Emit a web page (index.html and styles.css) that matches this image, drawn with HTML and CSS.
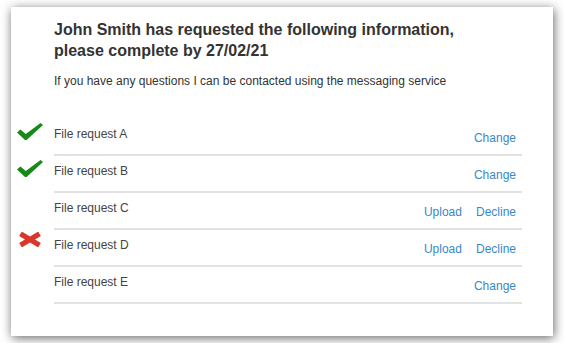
FILE: index.html
```html
<!DOCTYPE html>
<html lang="en">

<head>
  <meta charset="UTF-8">
  <meta name="viewport" content="width=device-width, initial-scale=1.0">
  <title>File requests</title>
  <link rel="stylesheet" href="styles.css">
</head>

<body>
  <div class="card">
    <h1 class="title">John Smith has requested the following information, please complete by 27/02/21</h1>
    <p class="intro">If you have any questions I can be contacted using the messaging service</p>

    <ul class="requests">
      <li class="request">
        <span class="status">
          <svg class="tick" width="26" height="17" viewBox="0 0 26 17"><polygon points="0,9.4 3.4,6.4 8.8,11 23.6,0 26,2 9.6,17 8,17" /></svg>
        </span>
        <div class="item">
          <span class="name">File request A</span>
          <span class="actions"><a href="#">Change</a></span>
        </div>
      </li>
      <li class="request">
        <span class="status">
          <svg class="tick" width="26" height="17" viewBox="0 0 26 17"><polygon points="0,9.4 3.4,6.4 8.8,11 23.6,0 26,2 9.6,17 8,17" /></svg>
        </span>
        <div class="item">
          <span class="name">File request B</span>
          <span class="actions"><a href="#">Change</a></span>
        </div>
      </li>
      <li class="request">
        <span class="status"></span>
        <div class="item">
          <span class="name">File request C</span>
          <span class="actions"><a href="#">Upload</a><a href="#">Decline</a></span>
        </div>
      </li>
      <li class="request">
        <span class="status">
          <svg class="cross" width="24" height="15" viewBox="0 0 24 15"><path d="M2.5 1.8 L21.5 13.2 M21.5 1.8 L2.5 13.2" /></svg>
        </span>
        <div class="item">
          <span class="name">File request D</span>
          <span class="actions"><a href="#">Upload</a><a href="#">Decline</a></span>
        </div>
      </li>
      <li class="request">
        <span class="status"></span>
        <div class="item">
          <span class="name">File request E</span>
          <span class="actions"><a href="#">Change</a></span>
        </div>
      </li>
    </ul>
  </div>
</body>

</html>
```

FILE: styles.css
```css
body {
  margin: 0;
  padding: 7px 11px;
  background-color: #fff;
  font-family: "Liberation Sans", Arial, sans-serif;
  color: #333;
}

.card {
  background-color: #fff;
  box-shadow: 1px 2px 10px rgba(0, 0, 0, 0.6);
  padding: 12px 31px 32px 6px;
}

.title {
  max-width: 410px;
  margin: 0 0 0 37px;
  font-size: 16px;
  line-height: 21px;
  font-weight: bold;
  color: #333;
}

.intro {
  margin: 13px 0 0 37px;
  font-size: 12px;
  color: #333;
}

.requests {
  list-style: none;
  margin: 31px 0 0;
  padding: 0;
}

.request {
  display: flex;
}

.status {
  width: 37px;
  flex-shrink: 0;
}

.tick {
  display: block;
  margin-top: 4px;
  fill: #168a16;
}

.cross {
  display: block;
  margin: 2px 0 0 1px;
  stroke: #d8372a;
  stroke-width: 5.2;
  fill: none;
}

.item {
  flex: 1;
  display: flex;
  justify-content: space-between;
  height: 35px;
  border-bottom: 2px solid #e2e2e2;
  font-size: 12px;
}

.name {
  padding-top: 8px;
  color: #444;
}

.actions {
  padding: 12px 6px 0 0;
  display: flex;
  gap: 14px;
}

.actions a {
  color: #3a87c7;
  text-decoration: none;
}
```
